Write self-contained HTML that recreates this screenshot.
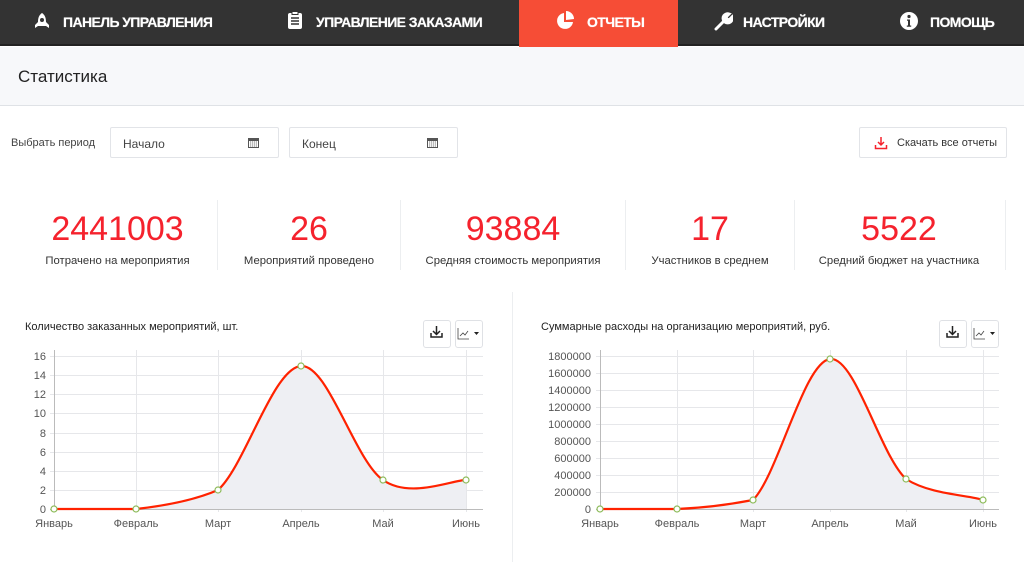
<!DOCTYPE html>
<html><head><meta charset="utf-8"><style>
*{margin:0;padding:0;box-sizing:border-box}
body{width:1024px;height:562px;overflow:hidden;background:#fff;font-family:"Liberation Sans","DejaVu Sans",sans-serif;position:relative;color:#333}
.nav{position:absolute;left:0;top:0;width:1024px;height:46px;background:#333;border-bottom:2px solid #222}
.ni{position:absolute;top:0;height:46px;line-height:44px;color:#fff;font-weight:bold;font-size:14px;letter-spacing:-0.6px;text-shadow:0 0 0.6px #fff}
.act{position:absolute;left:519px;top:0;width:159px;height:47px;background:#f64d36}
.sub{position:absolute;left:0;top:47px;width:1024px;height:59px;background:#f7f8fa;border-bottom:1px solid #dfe2e6}
.sub span{position:absolute;left:18px;top:20px;font-size:17px;color:#222}
.inp{position:absolute;top:127px;height:31px;border:1px solid #e2e4e8;border-radius:2px;font-size:12px;color:#444;padding:9px 12px}
.stat{position:absolute;top:208px;text-align:center}
.stat b{display:block;font-weight:normal;color:#f5222d;font-size:34px;line-height:42px}
.stat i{display:block;font-style:normal;font-size:11.3px;color:#333;margin-top:5px}
.sep{position:absolute;top:200px;width:1px;height:70px;background:#eceef0}
.btn{position:absolute;width:28px;height:28px;border:1px solid #dfe1e5;border-radius:3px;background:#fff}
svg text{font-family:"Liberation Sans",sans-serif}
</style></head><body>
<div class="nav"></div>
<div class="act"></div>
<div class="ni" style="left:33px"><svg width="18" height="18" viewBox="0 0 18 18" style="vertical-align:-3px;margin-right:12px"><path d="M9 1C6 3 5 6 5 10l-3 3v3l3-2h8l3 2v-3l-3-3c0-4-1-7-4-9z" fill="#fff"/><circle cx="9" cy="8" r="2" fill="#333"/></svg>ПАНЕЛЬ УПРАВЛЕНИЯ</div>
<div class="ni" style="left:286px"><svg width="18" height="19" viewBox="0 0 18 19" style="vertical-align:-3px;margin-right:12px"><rect x="2" y="2" width="14" height="16" rx="2" fill="#fff"/><rect x="6" y="0.5" width="6" height="3" fill="#fff" stroke="#333"/><path d="M5 7h8M5 10h8M5 13h8" stroke="#333" stroke-width="1.6"/></svg>УПРАВЛЕНИЕ ЗАКАЗАМИ</div>
<div class="ni" style="left:555px"><svg width="20" height="20" viewBox="0 0 20 20" style="vertical-align:-4px;margin-right:12px"><path d="M9 2A8 8 0 1 0 18 11H9z" fill="#fff"/><path d="M11 0A8 8 0 0 1 19 8l-8 1z" fill="#fff"/></svg>ОТЧЕТЫ</div>
<div class="ni" style="left:713px"><svg width="20" height="20" viewBox="0 0 20 20" style="vertical-align:-4px;margin-right:10px"><path d="M3 18l8-8M11 10a4.5 4.5 0 0 1 5-7l-3 3 1 2 2 1 3-3a4.5 4.5 0 0 1-7 5" stroke="#fff" stroke-width="3" fill="#fff" stroke-linecap="round"/></svg>НАСТРОЙКИ</div>
<div class="ni" style="left:899px"><svg width="20" height="20" viewBox="0 0 20 20" style="vertical-align:-4px;margin-right:11px"><circle cx="10" cy="10" r="9" fill="#fff"/><circle cx="10" cy="5.5" r="1.6" fill="#333"/><path d="M8 8.5h3v6h1.2v1.3H7.8v-1.3H9v-4.7H8z" fill="#333"/></svg>ПОМОЩЬ</div>
<div class="sub"><span>Статистика</span></div>
<div style="position:absolute;left:11px;top:137px;font-size:11px;color:#444">Выбрать период</div>
<div class="inp" style="left:110px;width:169px">Начало</div>
<div class="inp" style="left:289px;width:169px">Конец</div>
<svg style="position:absolute;left:247px;top:136px" width="13" height="13" viewBox="0 0 13 13"><rect x="1" y="2" width="11" height="10" fill="#555"/><rect x="2" y="5" width="9" height="6" fill="#fff"/><path d="M3 6h7M3 8h7M3 10h7" stroke="#777" stroke-dasharray="1.2 .8"/></svg>
<svg style="position:absolute;left:426px;top:136px" width="13" height="13" viewBox="0 0 13 13"><rect x="1" y="2" width="11" height="10" fill="#555"/><rect x="2" y="5" width="9" height="6" fill="#fff"/><path d="M3 6h7M3 8h7M3 10h7" stroke="#777" stroke-dasharray="1.2 .8"/></svg>
<div class="inp" style="left:859px;width:148px;height:31px;padding:9px 0 0 37px;font-size:11px;color:#333">Скачать все отчеты</div>
<svg style="position:absolute;left:874px;top:136px" width="14" height="14" viewBox="0 0 14 14"><path d="M7 1v8M4 6l3 3 3-3M1.5 9v3.5h11V9" stroke="#f5222d" stroke-width="1.5" fill="none"/></svg>

<div class="stat" style="left:20px;width:195px"><b>2441003</b><i>Потрачено на мероприятия</i></div>
<div class="sep" style="left:217px"></div>
<div class="stat" style="left:218px;width:182px"><b>26</b><i>Мероприятий проведено</i></div>
<div class="sep" style="left:400px"></div>
<div class="stat" style="left:401px;width:224px"><b>93884</b><i>Средняя стоимость мероприятия</i></div>
<div class="sep" style="left:625px"></div>
<div class="stat" style="left:626px;width:168px"><b>17</b><i>Участников в среднем</i></div>
<div class="sep" style="left:794px"></div>
<div class="stat" style="left:795px;width:208px"><b>5522</b><i>Средний бюджет на участника</i></div>
<div class="sep" style="left:1005px"></div>
<div style="position:absolute;left:512px;top:292px;width:1px;height:270px;background:#eceef0"></div>

<div style="position:absolute;left:25px;top:321px;font-size:11px;color:#222">Количество заказанных мероприятий, шт.</div>
<div style="position:absolute;left:541px;top:321px;font-size:11px;color:#222">Суммарные расходы на организацию мероприятий, руб.</div>
<div class="btn" style="left:423px;top:320px"></div><div class="btn" style="left:455px;top:320px"></div>
<div class="btn" style="left:939px;top:320px"></div><div class="btn" style="left:971px;top:320px"></div>

<svg style="position:absolute;left:0;top:0" width="1024" height="562">
<g fill="none" stroke="#222" stroke-width="1.5"><path d="M436.5 326v8M433 331l3.5 3.5 3.5-3.5M431 333v4h11v-4"/><path d="M952.5 326v8M949 331l3.5 3.5 3.5-3.5M947 333v4h11v-4"/></g>
<g fill="none" stroke="#444" stroke-width="0.8"><path d="M458 328v11h11M460 336l3-3 2 2 3-4"/><path d="M974 328v11h11M976 336l3-3 2 2 3-4"/></g>
<path d="M474 332h5l-2.5 3z M990 332h5l-2.5 3z" fill="#222"/>
<g stroke="#e6e7ea" stroke-width="1">
<path d="M50 356.5H483M50 375.5H483M50 394.5H483M50 413.5H483M50 433.5H483M50 452.5H483M50 471.5H483M50 490.5H483"/>
<path d="M54.5 350V512M136.5 350V512M218.5 350V512M301.5 350V512M383.5 350V512M466.5 350V512"/>
<path d="M596 356.5H999M596 373.5H999M596 390.5H999M596 407.5H999M596 424.5H999M596 441.5H999M596 458.5H999M596 475.5H999M596 492.5H999"/>
<path d="M600.5 350V512M677.5 350V512M753.5 350V512M830.5 350V512M906.5 350V512M983.5 350V512"/>
</g>
<path d="M50 509.5H483M54.5 350V509M596 509.5H999M600.5 350V509" stroke="#bbb"/>
<path d="M54 509C68 509 122 509 136 509C163 506 195 500 218 490C245 466 273 368 301 366C328 364 355 461 383 480C410 499 452 480 466 480V509H54z" fill="#eeeff3"/>
<path d="M54 509C68 509 122 509 136 509C163 506 195 500 218 490C245 466 273 368 301 366C328 364 355 461 383 480C410 499 452 480 466 480" fill="none" stroke="#ff2200" stroke-width="2.2"/>
<path d="M600 509C613 509 664 509 677 509C702 508 727 505 753 500C778 475 804 362 830 359C855 356 880 455 906 479C931 495 970 495 983 500V509H600z" fill="#eeeff3"/>
<path d="M600 509C613 509 664 509 677 509C702 508 727 505 753 500C778 475 804 362 830 359C855 356 880 455 906 479C931 495 970 495 983 500" fill="none" stroke="#ff2200" stroke-width="2.2"/>
<g fill="#fff" stroke="#8dbb5a" stroke-width="1.2">
<circle cx="54" cy="509" r="3"/><circle cx="136" cy="509" r="3"/><circle cx="218" cy="490" r="3"/><circle cx="301" cy="366" r="3"/><circle cx="383" cy="480" r="3"/><circle cx="466" cy="480" r="3"/>
<circle cx="600" cy="509" r="3"/><circle cx="677" cy="509" r="3"/><circle cx="753" cy="500" r="3"/><circle cx="830" cy="359" r="3"/><circle cx="906" cy="479" r="3"/><circle cx="983" cy="500" r="3"/>
</g>
<g font-size="11" fill="#555" text-anchor="end">
<text x="46" y="360">16</text><text x="46" y="379">14</text><text x="46" y="398">12</text><text x="46" y="417">10</text><text x="46" y="437">8</text><text x="46" y="456">6</text><text x="46" y="475">4</text><text x="46" y="494">2</text><text x="46" y="513">0</text>
<text x="591" y="360">1800000</text><text x="591" y="377">1600000</text><text x="591" y="394">1400000</text><text x="591" y="411">1200000</text><text x="591" y="428">1000000</text><text x="591" y="445">800000</text><text x="591" y="462">600000</text><text x="591" y="479">400000</text><text x="591" y="496">200000</text><text x="591" y="513">0</text>
</g>
<g font-size="11" fill="#555" text-anchor="middle">
<text x="54" y="527">Январь</text><text x="136" y="527">Февраль</text><text x="218" y="527">Март</text><text x="301" y="527">Апрель</text><text x="383" y="527">Май</text><text x="466" y="527">Июнь</text>
<text x="600" y="527">Январь</text><text x="677" y="527">Февраль</text><text x="753" y="527">Март</text><text x="830" y="527">Апрель</text><text x="906" y="527">Май</text><text x="983" y="527">Июнь</text>
</g>
</svg>
</body></html>
